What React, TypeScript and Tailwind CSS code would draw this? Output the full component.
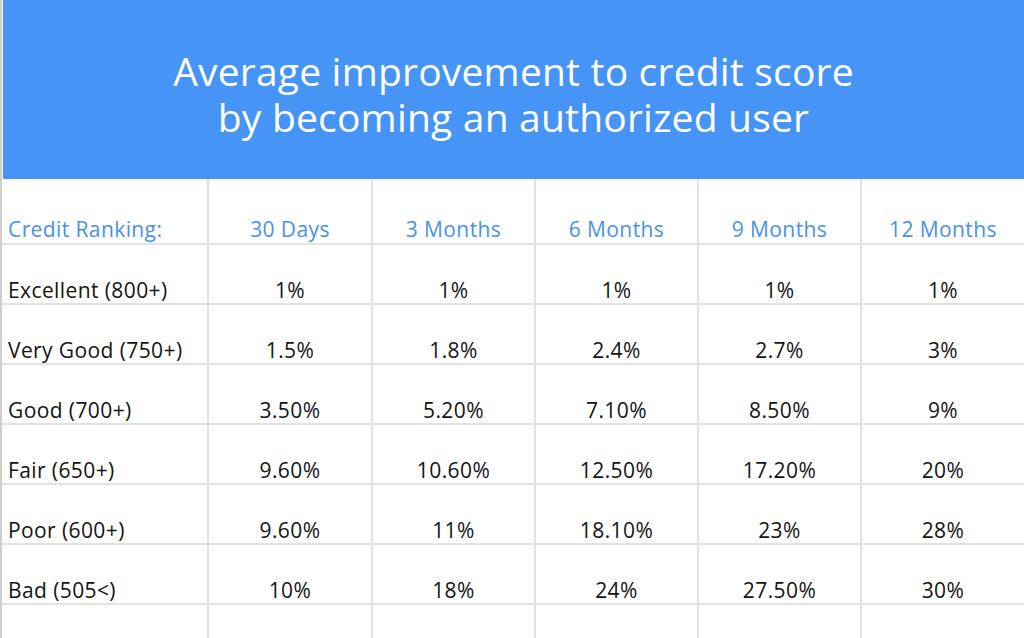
import React from "react";

const headers = ["Credit Ranking:", "30 Days", "3 Months", "6 Months", "9 Months", "12 Months"];
const rows: string[][] = [
  ["Excellent (800+)", "1%", "1%", "1%", "1%", "1%"],
  ["Very Good (750+)", "1.5%", "1.8%", "2.4%", "2.7%", "3%"],
  ["Good (700+)", "3.50%", "5.20%", "7.10%", "8.50%", "9%"],
  ["Fair (650+)", "9.60%", "10.60%", "12.50%", "17.20%", "20%"],
  ["Poor (600+)", "9.60%", "11%", "18.10%", "23%", "28%"],
  ["Bad (505<)", "10%", "18%", "24%", "27.50%", "30%"],
  ["", "", "", "", "", ""],
];

const cols = "grid grid-cols-[207px_164px_163px_163px_163px_1fr]";

export default function App() {
  return (
    <div
      className="w-[1024px] h-[638px] overflow-hidden bg-white flex"
      style={{ fontFamily: '"Open Sans", "Noto Sans", sans-serif' }}
    >
      <div className="w-[2px] shrink-0 bg-[#cfcfcf]" />
      <div className="flex-1 flex flex-col">
        <div className="ml-[1px] h-[179px] shrink-0 bg-[#4594f6] flex flex-col items-center justify-center pt-[8px]">
          <h1 className="text-white text-center text-[39px] leading-[46px] font-medium tracking-[0.2px]">
            Average improvement to credit score
          </h1>
          <h1 className="text-white text-center text-[39px] leading-[46px] font-medium tracking-[0.2px]">
            by becoming an authorized user
          </h1>
        </div>
        <div className={`${cols} h-[66px] shrink-0 border-b-2 border-[#e2e2e2] text-[#4a92e6] text-[21px] tracking-[0.4px]`}>
          {headers.map((h, i) => (
            <div
              key={i}
              className={`flex items-end pb-[2px] ${i === 0 ? "pl-[6px]" : "justify-center"} ${i < 5 ? "border-r-2 border-[#e2e2e2]" : ""}`}
            >
              <span className="leading-[24px] whitespace-nowrap">{h}</span>
            </div>
          ))}
        </div>
        {rows.map((r, ri) => (
          <div
            key={ri}
            className={`${cols} h-[60px] shrink-0 border-b-2 border-[#e2e2e2] text-[#141414] text-[21px] tracking-[0.4px]`}
          >
            {r.map((c, ci) => (
              <div
                key={ci}
                className={`flex items-end pb-[1px] ${ci === 0 ? "pl-[6px]" : "justify-center"} ${ci < 5 ? "border-r-2 border-[#e2e2e2]" : ""}`}
              >
                <span className="leading-[24px] whitespace-nowrap">{c}</span>
              </div>
            ))}
          </div>
        ))}
      </div>
    </div>
  );
}
